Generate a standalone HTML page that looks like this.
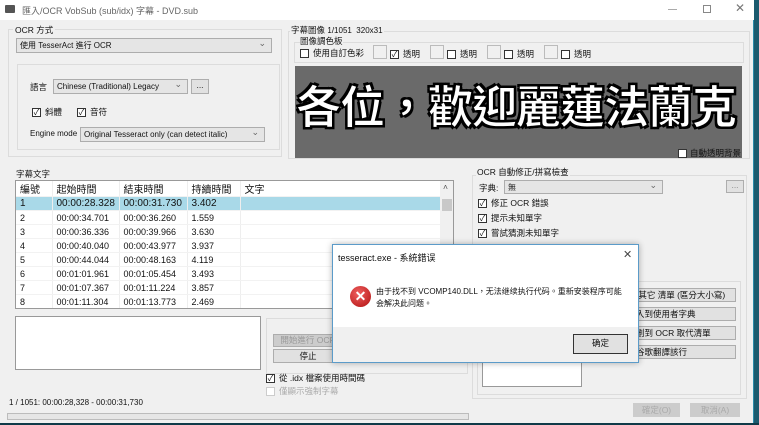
<!DOCTYPE html>
<html><head><meta charset="utf-8"><style>
*{box-sizing:border-box;margin:0;padding:0}
body{width:759px;height:425px;overflow:hidden;background:#1b5a6e;font-family:"Liberation Sans","Noto Sans CJK TC",sans-serif;font-size:9px;color:#111;position:relative}
.a{position:absolute}
.win{left:0;top:0;width:754px;height:423px;background:#f0f0f0;border-right:1px solid #2a8aa8}
.title{left:0;top:0;width:754px;height:20px;background:#fff}
.grp{border:1px solid #dcdcdc}
.dd{background:#e5e5e5;border:1px solid #adadad;padding-left:3px;line-height:13px;font-size:8px}
.dd:after{content:"⌄";position:absolute;right:5px;top:-2px;color:#666;font-size:9px}
.btn{background:#e1e1e1;border:1px solid #adadad;text-align:center;line-height:13px;font-size:8.5px}
.cb{width:9px;height:9px;border:1px solid #333;background:#fff;font-size:8px;line-height:7px;text-align:center}
.lbl{font-size:8.5px;white-space:nowrap}
table{border-collapse:collapse;font-size:9px}
td{height:14px;padding-left:4px;border-right:1px solid #eee;border-bottom:1px solid #f2f2f2;white-space:nowrap}
</style></head><body>
<div class="a win"></div>
<div class="a title"></div>
<div class="a" style="left:5px;top:5px;width:10px;height:8px;background:#555;border-radius:1px"></div>
<div class="a lbl" style="left:22px;top:4px;color:#666;font-size:9px">匯入/OCR VobSub (sub/idx) 字幕 - DVD.sub</div>
<div class="a" style="left:668px;top:9px;width:9px;height:1px;background:#aaa"></div>
<div class="a" style="left:703px;top:5px;width:8px;height:8px;border:1px solid #888"></div>
<div class="a lbl" style="left:735px;top:1px;font-size:12px;color:#777">✕</div>

<div class="a grp" style="left:8px;top:29px;width:274px;height:128px"></div>
<div class="a lbl" style="left:13px;top:24px;background:#f0f0f0;padding:0 2px">OCR 方式</div>
<div class="a dd" style="left:16px;top:38px;width:256px;height:15px">使用 TesserAct 進行 OCR</div>
<div class="a grp" style="left:17px;top:64px;width:263px;height:86px"></div>
<div class="a lbl" style="left:30px;top:81px">語言</div>
<div class="a dd" style="left:53px;top:79px;width:135px;height:15px">Chinese (Traditional) Legacy</div>
<div class="a btn" style="left:191px;top:79px;width:18px;height:15px;line-height:11px">...</div>
<div class="a cb" style="left:32px;top:108px">✓</div><div class="a lbl" style="left:45px;top:106px">斜體</div>
<div class="a cb" style="left:77px;top:108px">✓</div><div class="a lbl" style="left:90px;top:106px">音符</div>
<div class="a lbl" style="left:30px;top:129px;font-size:8px">Engine mode</div>
<div class="a dd" style="left:80px;top:127px;width:185px;height:15px">Original Tesseract only (can detect italic)</div>

<div class="a grp" style="left:288px;top:31px;width:462px;height:128px"></div>
<div class="a lbl" style="left:290px;top:24px;background:#f0f0f0;padding:0 1px">字幕圖像 <span style="font-size:8px">1/1051&nbsp; 320x31</span></div>
<div class="a grp" style="left:294px;top:42px;width:450px;height:21px"></div>
<div class="a lbl" style="left:300px;top:35px;background:#f0f0f0">圖像調色板</div>
<div class="a cb" style="left:300px;top:49px"></div><div class="a lbl" style="left:313px;top:47px">使用自訂色彩</div>
<div class="a" style="left:373px;top:45px;width:14px;height:14px;border:1px solid #bbb"></div><div class="a cb" style="left:390px;top:50px">✓</div><div class="a lbl" style="left:403px;top:48px">透明</div>
<div class="a" style="left:430px;top:45px;width:14px;height:14px;border:1px solid #bbb"></div><div class="a cb" style="left:447px;top:50px"></div><div class="a lbl" style="left:460px;top:48px">透明</div>
<div class="a" style="left:487px;top:45px;width:14px;height:14px;border:1px solid #bbb"></div><div class="a cb" style="left:504px;top:50px"></div><div class="a lbl" style="left:517px;top:48px">透明</div>
<div class="a" style="left:544px;top:45px;width:14px;height:14px;border:1px solid #bbb"></div><div class="a cb" style="left:561px;top:50px"></div><div class="a lbl" style="left:574px;top:48px">透明</div>
<div class="a" style="left:295px;top:66px;width:447px;height:92px;background:#6a6a6a"></div>
<div class="a" style="left:296px;top:81px;width:446px;font-size:45px;line-height:54px;color:#fff;font-weight:bold;letter-spacing:-1px;white-space:nowrap;overflow:hidden;-webkit-text-stroke:1px #000;text-shadow:2px 2px 0 #000,-2px -2px 0 #000,2px -2px 0 #000,-2px 2px 0 #000">各位，歡迎麗蓮法蘭克</div>
<div class="a cb" style="left:678px;top:149px"></div><div class="a lbl" style="left:690px;top:147px;color:#111">自動透明背景</div>

<div class="a lbl" style="left:16px;top:168px">字幕文字</div>
<div class="a" style="left:15px;top:180px;width:439px;height:129px;background:#fff;border:1px solid #999;overflow:hidden">
<table style="width:425px">
<tr style="font-size:10px"><td style="width:36px">編號</td><td style="width:67px">起始時間</td><td style="width:68px">結束時間</td><td style="width:53px">持續時間</td><td>文字</td></tr>
<tr style="background:#a9d9e8;font-size:10px"><td>1</td><td>00:00:28.328</td><td>00:00:31.730</td><td>3.402</td><td></td></tr>
<tr><td>2</td><td>00:00:34.701</td><td>00:00:36.260</td><td>1.559</td><td></td></tr>
<tr><td>3</td><td>00:00:36.336</td><td>00:00:39.966</td><td>3.630</td><td></td></tr>
<tr><td>4</td><td>00:00:40.040</td><td>00:00:43.977</td><td>3.937</td><td></td></tr>
<tr><td>5</td><td>00:00:44.044</td><td>00:00:48.163</td><td>4.119</td><td></td></tr>
<tr><td>6</td><td>00:01:01.961</td><td>00:01:05.454</td><td>3.493</td><td></td></tr>
<tr><td>7</td><td>00:01:07.367</td><td>00:01:11.224</td><td>3.857</td><td></td></tr>
<tr><td>8</td><td>00:01:11.304</td><td>00:01:13.773</td><td>2.469</td><td></td></tr>
</table>
<div class="a" style="left:424px;top:0;width:14px;height:128px;background:#f0f0f0"></div>
<div class="a" style="left:426px;top:18px;width:10px;height:12px;background:#c8c8c8"></div>
<div class="a lbl" style="left:427px;top:1px;color:#555">˄</div>
</div>
<div class="a" style="left:15px;top:316px;width:246px;height:54px;background:#fff;border:1px solid #999"></div>
<div class="a grp" style="left:266px;top:318px;width:202px;height:56px"></div>
<div class="a btn" style="left:273px;top:334px;width:70px;height:13px;color:#999;line-height:11px;background:#ccc">開始進行 OCR</div>
<div class="a btn" style="left:273px;top:349px;width:70px;height:14px">停止</div>
<div class="a cb" style="left:266px;top:374px">✓</div><div class="a lbl" style="left:279px;top:372px">從 .idx 檔案使用時間碼</div>
<div class="a cb" style="left:266px;top:387px;border-color:#ccc"></div><div class="a lbl" style="left:279px;top:385px;color:#aaa">僅顯示強制字幕</div>
<div class="a lbl" style="left:9px;top:398px;font-size:8px">1 / 1051: 00:00:28,328 - 00:00:31,730</div>
<div class="a" style="left:7px;top:413px;width:462px;height:7px;background:#e6e6e6;border:1px solid #bcbcbc"></div>

<div class="a grp" style="left:472px;top:175px;width:275px;height:224px"></div>
<div class="a lbl" style="left:476px;top:166px;background:#f0f0f0;padding:0 1px">OCR 自動修正/拼寫檢查</div>
<div class="a lbl" style="left:479px;top:182px">字典:</div>
<div class="a dd" style="left:504px;top:180px;width:159px;height:14px">無</div>
<div class="a btn" style="left:726px;top:180px;width:18px;height:13px;line-height:9px;color:#888">...</div>
<div class="a cb" style="left:478px;top:199px">✓</div><div class="a lbl" style="left:491px;top:197px">修正 OCR 錯誤</div>
<div class="a cb" style="left:478px;top:214px">✓</div><div class="a lbl" style="left:491px;top:212px">提示未知單字</div>
<div class="a cb" style="left:478px;top:229px">✓</div><div class="a lbl" style="left:491px;top:227px">嘗試猜測未知單字</div>
<div class="a grp" style="left:477px;top:281px;width:264px;height:114px"></div>
<div class="a btn" style="left:600px;top:288px;width:136px;height:14px;text-align:left;padding-left:35px">/其它 清單 (區分大小寫)</div>
<div class="a btn" style="left:600px;top:307px;width:136px;height:14px;text-align:left;padding-left:35px">入到使用者字典</div>
<div class="a btn" style="left:600px;top:326px;width:136px;height:14px;text-align:left;padding-left:35px">劃到 OCR 取代清單</div>
<div class="a btn" style="left:600px;top:345px;width:136px;height:14px;text-align:left;padding-left:35px">谷歌翻譯該行</div>
<div class="a" style="left:482px;top:360px;width:100px;height:27px;background:#fff;border:1px solid #999"></div>
<div class="a btn" style="left:633px;top:403px;width:47px;height:14px;color:#aaa;background:#ccc;border-color:#ccc">確定(O)</div>
<div class="a btn" style="left:690px;top:403px;width:50px;height:14px;color:#aaa;background:#ccc;border-color:#ccc">取消(A)</div>

<div class="a" style="left:332px;top:244px;width:307px;height:119px;background:#f0f0f0;border:1px solid #5b9bc9;box-shadow:0 0 6px rgba(0,0,0,.3)">
<div class="a" style="left:0;top:0;width:305px;height:82px;background:#fff"></div>
<div class="a lbl" style="left:5px;top:6px;font-size:9px">tesseract.exe - 系統錯误</div>
<div class="a lbl" style="left:290px;top:3px;font-size:11px;color:#444">✕</div>
<div class="a" style="left:17px;top:41px;width:21px;height:21px;border-radius:50%;background:radial-gradient(circle at 40% 35%,#f06060,#b01010);color:#fff;font-size:14px;line-height:21px;text-align:center;font-weight:bold">✕</div>
<div class="a lbl" style="left:43px;top:41px;font-size:8px">由于找不到 VCOMP140.DLL，无法继续执行代码。重新安装程序可能</div>
<div class="a lbl" style="left:43px;top:53px;font-size:8px">会解决此问题。</div>
<div class="a btn" style="left:240px;top:89px;width:55px;height:20px;line-height:17px;border:1px solid #333;background:#e1e1e1">确定</div>
</div>
<div class="a" style="left:0;top:423px;width:759px;height:2px;background:#0f3a48"></div>
</body></html>
